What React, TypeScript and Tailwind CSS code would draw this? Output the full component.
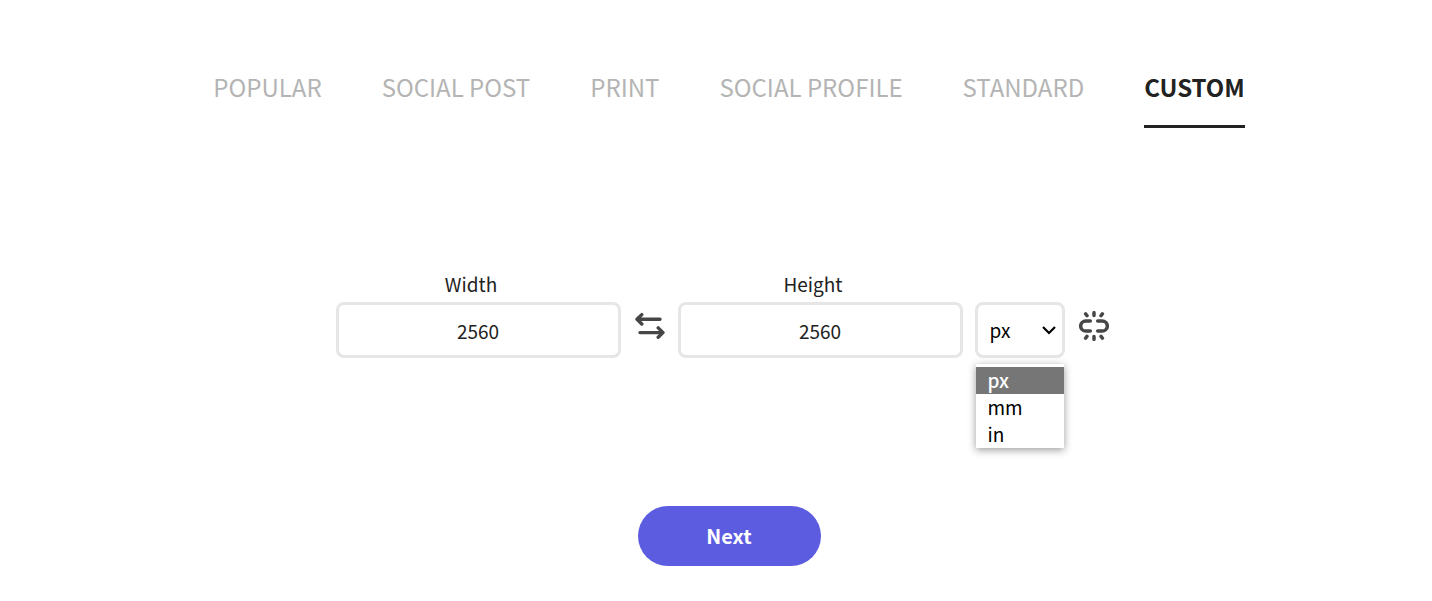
import { useState } from 'react'
import { clsx } from 'clsx'

const tabs = ['POPULAR', 'SOCIAL POST', 'PRINT', 'SOCIAL PROFILE', 'STANDARD', 'CUSTOM']
const units = ['px', 'mm', 'in']

const SwapIcon = () => (
  <svg width="30" height="30" viewBox="0 0 30 30" fill="none" stroke="#464646" strokeWidth="3.4" strokeLinecap="round" strokeLinejoin="round" aria-hidden="true">
    <path d="M25 8.300H3M6.800 3.600L2 8.300L6.800 13" />
    <path d="M5 21.600H27M23.200 16.900L28 21.600L23.200 26.300" />
  </svg>
)

const UnlinkIcon = () => (
  <svg width="30" height="30" viewBox="0 0 30 30" fill="none" stroke="#464646" strokeWidth="3.500" strokeLinecap="round" aria-hidden="true">
    <path d="M11.300 9.900H6.800a5 5 0 0 0 0 10.200H11.300M18.700 9.900H23.200a5 5 0 0 1 0 10.200H18.700" />
    <path d="M15 1.700V4.600M15 25.400V28.300M6.600 2.800L8 4.700M23.400 2.800L22 4.700M6.600 27.200L8 25.300M23.400 27.200L22 25.300" />
  </svg>
)

type SizeFieldProps = {
  id: string
  label: string
  value: string
  onChange: (value: string) => void
}

const SizeField = ({ id, label, value, onChange }: SizeFieldProps) => (
  <div className="flex min-w-0 flex-col">
    <label htmlFor={id} className="pr-3.5 text-center text-[19px] leading-9">
      {label}
    </label>
    <input
      id={id}
      type="text"
      inputMode="numeric"
      value={value}
      onChange={(e) => onChange(e.target.value)}
      className="h-14 w-[285px] max-w-full rounded-lg border-3 border-[#e6e6e6] bg-white text-center text-[19px] outline-none"
    />
  </div>
)

const App = () => {
  const [activeTab, setActiveTab] = useState('CUSTOM')
  const [width, setWidth] = useState('2560')
  const [height, setHeight] = useState('2560')
  const [unit, setUnit] = useState('px')
  const [open, setOpen] = useState(true)

  const swap = () => {
    setWidth(height)
    setHeight(width)
  }

  const pickUnit = (value: string) => {
    setUnit(value)
    setOpen(false)
  }

  return (
    <main className="flex flex-col items-center bg-white pt-14 pb-8 pl-[26px] font-['Noto_Sans_CJK_JP',sans-serif] text-[#222]">
      <nav role="tablist" className="flex flex-wrap justify-center gap-[60px]">
        {tabs.map((tab) => (
          <button
            key={tab}
            type="button"
            role="tab"
            aria-selected={activeTab === tab}
            onClick={() => setActiveTab(tab)}
            className={clsx(
              'h-18 border-b-3 pb-2 text-2xl',
              activeTab === tab ? 'border-[#222] font-bold' : 'border-transparent text-[#b4b4b4]'
            )}>
            {tab}
          </button>
        ))}
      </nav>

      <form className="mt-[138px] flex flex-col items-center" onSubmit={(e) => e.preventDefault()}>
        <div className="flex items-end pr-3.5">
          <SizeField id="width" label="Width" value={width} onChange={setWidth} />
          <button type="button" aria-label="Swap width and height" onClick={swap} className="flex h-16 w-[57px] items-center justify-center pl-0.5">
            <SwapIcon />
          </button>
          <SizeField id="height" label="Height" value={height} onChange={setHeight} />
          <div className="relative ml-3">
            <select
              aria-label="Unit"
              value={unit}
              onChange={(e) => pickUnit(e.target.value)}
              className="block h-14 w-[90px] appearance-none rounded-lg border-3 border-[#e6e6e6] bg-white pl-3 text-[19px] text-black outline-none">
              {units.map((u) => (
                <option key={u}>{u}</option>
              ))}
            </select>
            <svg className="pointer-events-none absolute top-5 right-2 size-4" viewBox="0 0 16 16" fill="none" stroke="#000" strokeWidth="2.200" aria-hidden="true">
              <path d="M2 5L8 11L14 5" />
            </svg>
            {open && (
              <ul role="listbox" aria-label="Unit options" className="absolute inset-x-px top-full mt-1.5 bg-white pt-[3px] text-[19px] text-black shadow-[0_2px_8px_rgba(0,0,0,0.4)]">
                {units.map((u) => (
                  <li
                    key={u}
                    role="option"
                    aria-selected={unit === u}
                    onClick={() => pickUnit(u)}
                    className={clsx('h-[27px] px-3 leading-[25px]', unit === u && 'bg-[#767676] font-medium text-white')}>
                    {u}
                  </li>
                ))}
              </ul>
            )}
          </div>
          <button type="button" aria-label="Unlink dimensions" className="ml-3.5 flex h-16 items-center">
            <UnlinkIcon />
          </button>
        </div>
        <button type="submit" className="mt-37 h-15 w-[183px] rounded-full bg-[#5c5ce0] text-xl font-bold text-white">
          Next
        </button>
      </form>
    </main>
  )
}

export default App
